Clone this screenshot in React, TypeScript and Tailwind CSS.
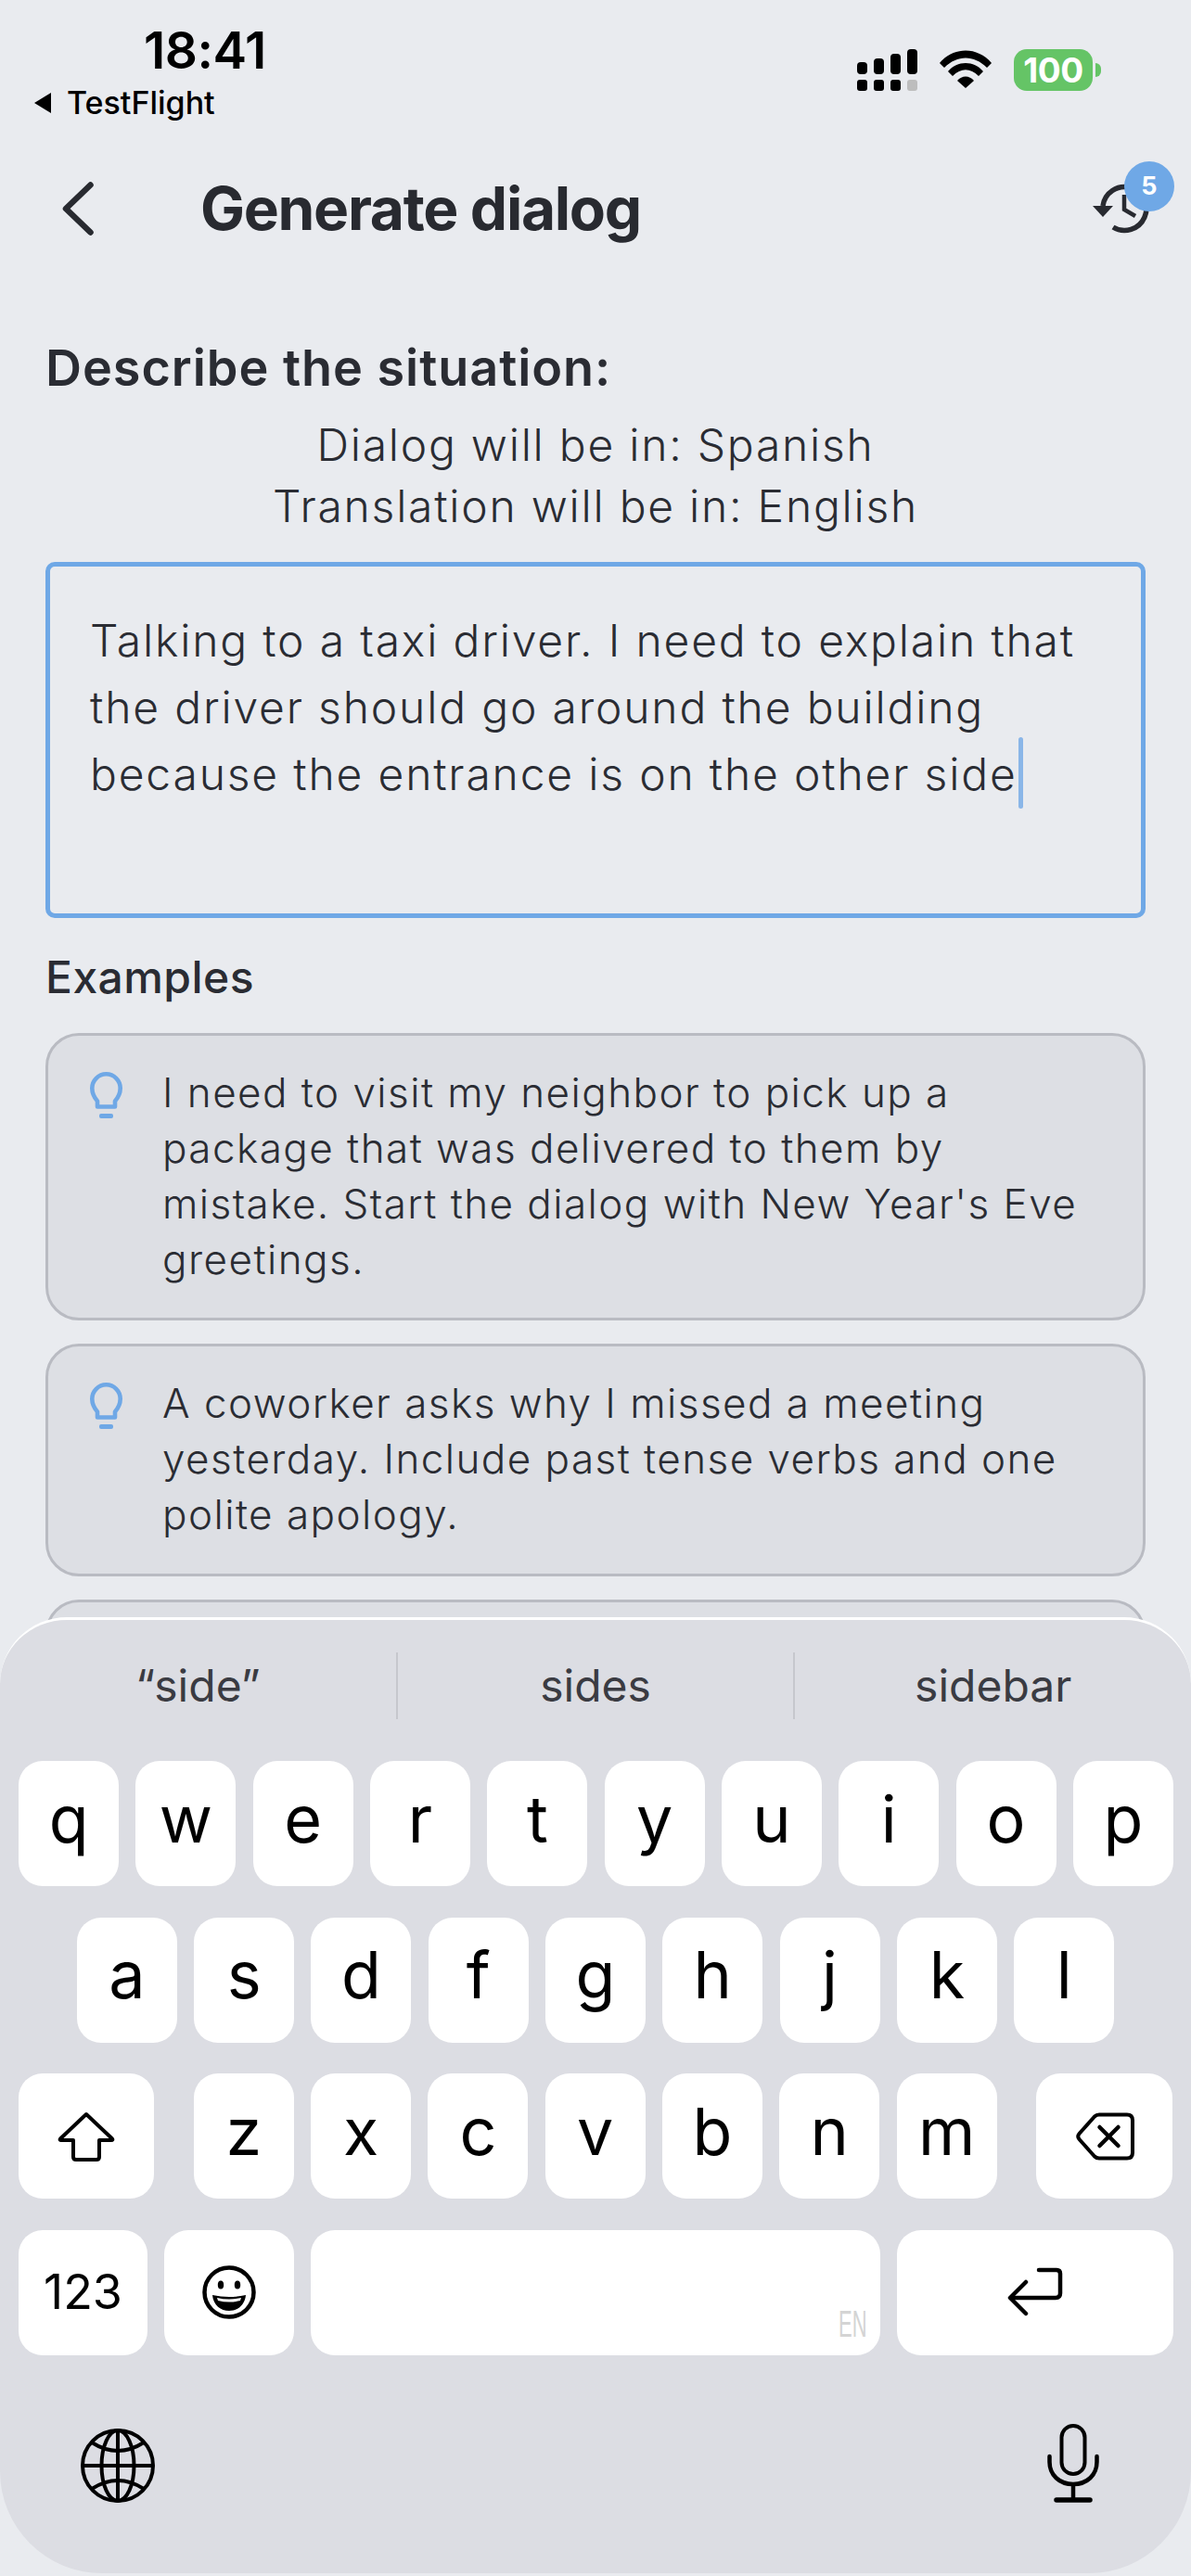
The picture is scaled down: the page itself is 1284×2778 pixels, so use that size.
const ink = "#282a30";

function Signal() {
  return (
    <div className="flex gap-[7px]">
      {[13, 17, 22, 27].map((h, i) => (
        <div key={i} className="flex h-[45px] w-[11px] flex-col justify-end gap-[6px]">
          <div className="w-full rounded-[4px] bg-black" style={{ height: h }} />
          <div className={i === 3 ? "h-[12px] w-full rounded-[3px] bg-[#bdbdbd]" : "h-[12px] w-full rounded-[3px] bg-black"} />
        </div>
      ))}
    </div>
  );
}

function Wifi() {
  return (
    <svg width="58" height="42" viewBox="0 0 58 42" className="block">
      <path d="M1 15 C16 -3 42 -3 57 15 L52 20 C38 6 20 6 6 20 Z" fill="#000" />
      <path d="M10 24 C20 12 38 12 48 24 L43 29 C34 20 24 20 15 29 Z" fill="#000" />
      <path d="M20 34 C25 28 33 28 38 34 L29 42 Z" fill="#000" />
    </svg>
  );
}

function Battery() {
  return (
    <div className="flex items-center gap-[3px]">
      <div className="flex h-[45px] w-[85px] items-center justify-center rounded-[14px] bg-[#65c466] text-[37px] font-bold leading-none tracking-[-0.5px] text-white">100</div>
      <div className="h-[15px] w-[6px] rounded-r-full bg-[#65c466]" />
    </div>
  );
}

function HistoryIcon() {
  return (
    <svg width="66" height="60" viewBox="0 0 66 60" fill="none" className="block">
      <path d="M11 27 A23.5 23.5 0 1 1 22 50" stroke={ink} strokeWidth="5.5" />
      <path d="M0 27 L22 27 L11 39 Z" fill={ink} />
      <path d="M34 15 L34 31 L46 38" stroke={ink} strokeWidth="4.5" />
    </svg>
  );
}

function Bulb() {
  return (
    <svg width="35" height="50" viewBox="0 0 35 50" fill="none" className="mt-[8px] block shrink-0">
      <path d="M8 37.5 L8 31.5 C5 28 2.3 23.5 2.3 17.5 A15.2 15.2 0 0 1 32.7 17.5 C32.7 23.5 30 28 27 31.5 L27 37.5 Z" stroke="#6fa8e6" strokeWidth="4.6" strokeLinejoin="round" />
      <rect x="10" y="45" width="15" height="5" rx="2" fill="#6fa8e6" />
    </svg>
  );
}

function Card({ lines, className = "" }: { lines: string[]; className?: string }) {
  return (
    <div className={"flex gap-[43px] rounded-[36px] border-[3px] border-[#b9bbc2] bg-[#dddfe4] pl-[45px] pt-[31px] " + className}>
      <Bulb />
      <div className="text-[44px] font-[350] leading-[60px] tracking-[1.45px] text-[#2a2c33]">
        {lines.map((l) => (
          <div key={l} className="whitespace-nowrap">{l}</div>
        ))}
      </div>
    </div>
  );
}

function Key({ children, className = "w-[108px]" }: { children?: React.ReactNode; className?: string }) {
  return (
    <div className={"relative flex h-[135px] items-center justify-center rounded-[26px] bg-white leading-none text-black " + className}>
      {children}
    </div>
  );
}

function Row({ keys }: { keys: string }) {
  return (
    <>
      {keys.split("").map((k) => (
        <Key key={k}>
          <span className="mt-[-10px] text-[70px] font-normal">{k}</span>
        </Key>
      ))}
    </>
  );
}

function Shift() {
  return (
    <svg width="62" height="54" viewBox="0 0 62 54" fill="none">
      <path d="M31 3 L59 29.5 Q60 31 58 31 L45 31 L45 49 Q45 52 42 52 L20 52 Q17 52 17 49 L17 31 L4 31 Q2 31 3 29.5 Z" stroke="#000" strokeWidth="4" strokeLinejoin="round" />
    </svg>
  );
}

function Backspace() {
  return (
    <svg width="64" height="52" viewBox="0 0 64 52" fill="none">
      <path d="M26 2.5 L56 2.5 Q62 2.5 62 8.5 L62 43.5 Q62 49.5 56 49.5 L26 49.5 Q23 49.5 21 47.5 L4.5 29 Q2 26 4.5 23 L21 4.5 Q23 2.5 26 2.5 Z" stroke="#000" strokeWidth="4" strokeLinejoin="round" />
      <path d="M26.5 16 L46.5 36 M46.5 16 L26.5 36" stroke="#000" strokeWidth="4.5" strokeLinecap="round" />
    </svg>
  );
}

function Emoji() {
  return (
    <svg width="58" height="58" viewBox="0 0 58 58" fill="none">
      <circle cx="29" cy="29" r="26.5" stroke="#000" strokeWidth="4.5" />
      <ellipse cx="20" cy="21" rx="3.2" ry="4.5" fill="#000" />
      <ellipse cx="38" cy="21" rx="3.2" ry="4.5" fill="#000" />
      <path d="M11 32 Q29 36 47 32 C46 43 38 49 29 49 C20 49 12 43 11 32 Z" fill="#000" />
      <path d="M16 35 Q29 38 42 35 L41 38 Q29 41 17 38 Z" fill="#fff" />
    </svg>
  );
}

function Return() {
  return (
    <svg width="60" height="54" viewBox="0 0 60 54" fill="none" stroke="#000" strokeWidth="4.5" strokeLinecap="round" strokeLinejoin="round">
      <path d="M34 3 L53 3 Q57 3 57 7 L57 28 Q57 33 52 33 L4 33" />
      <path d="M20 16 L3 33 L20 50" />
    </svg>
  );
}

function Globe() {
  return (
    <svg width="80" height="80" viewBox="0 0 80 80" fill="none" stroke="#000" strokeWidth="4">
      <circle cx="40" cy="40" r="38" />
      <ellipse cx="40" cy="40" rx="17.5" ry="38" />
      <path d="M40 2 L40 78 M2 40 L78 40" />
      <path d="M12 15 Q40 33 68 15 M12 65 Q40 47 68 65" />
    </svg>
  );
}

function Mic() {
  return (
    <svg width="56" height="85" viewBox="0 0 56 85" fill="none" stroke="#000">
      <rect x="15.5" y="2" width="25" height="52" rx="12.5" strokeWidth="4" />
      <path d="M2.5 35 L2.5 41 C2.5 55 13 65 28 65 C43 65 53.5 55 53.5 41 L53.5 35" strokeWidth="4.5" strokeLinecap="round" />
      <path d="M28 65 L28 81" strokeWidth="4.5" />
      <path d="M10 82 L46 82" strokeWidth="5.5" strokeLinecap="round" />
    </svg>
  );
}

function Suggestion({ children }: { children: React.ReactNode }) {
  return <div className="flex w-[427px] items-center justify-center text-[48px] font-normal leading-none text-[#3a3b42]">{children}</div>;
}

export default function App() {
  return (
    <div
      className="relative h-[2778px] w-[1284px] overflow-hidden bg-[#e9ebef]"
      style={{ fontFamily: "Inter, 'Liberation Sans', sans-serif" }}
    >
      {/* Status bar */}
      <div className="flex h-[165px] items-start justify-between pl-[37px] pr-[97px] pt-[26px] text-black">
        <div>
          <div className="pl-[118px] text-[55px] font-semibold leading-[56px] tracking-[-0.5px]">18:41</div>
          <div className="mt-[7px] flex items-center gap-[12px]">
            <div className="h-0 w-0 border-y-[11px] border-r-[18px] border-y-transparent border-r-black" />
            <span className="ml-[5px] text-[34px] font-medium leading-[44px]">TestFlight</span>
          </div>
        </div>
        <div className="mt-[27px] flex items-start gap-[23px]">
          <Signal />
          <Wifi />
          <Battery />
        </div>
      </div>

      {/* Header */}
      <div className="flex h-[120px] items-center pl-[67px] pr-[40px]">
        <svg width="34" height="58" viewBox="0 0 34 58" fill="none" className="mr-[115px] block shrink-0">
          <path d="M30.5 3.5 L4 29 L30.5 54.5" stroke={ink} strokeWidth="6.5" strokeLinecap="round" strokeLinejoin="round" />
        </svg>
        <h1 className="flex-1 text-[64px] font-bold leading-none tracking-[-1.3px] text-[#282a30]">Generate dialog</h1>
        <div className="relative h-[60px] w-[66px]">
          <HistoryIcon />
          <div className="absolute left-[34px] top-[-21px] flex h-[54px] w-[54px] items-center justify-center rounded-full bg-[#6fa8e6] text-[27px] font-bold text-white">5</div>
        </div>
      </div>

      {/* Form */}
      <div className="px-[49px]">
        <h2 className="mt-[82px] text-[54px] font-semibold leading-[60px] tracking-[0.95px] text-[#2a2c33]">
          Describe the situation:
        </h2>
        <div className="mt-[20px] text-center text-[48px] font-[350] leading-[66px] tracking-[1.75px] text-[#2a2c33]">
          <div>Dialog will be in: Spanish</div>
          <div>Translation will be in: English</div>
        </div>
        <div className="relative mt-[27px] h-[384px] rounded-[10px] border-[5px] border-[#6fa8e6] pl-[43px] pt-[44px] text-[48px] font-[350] leading-[72px] tracking-[1.82px] text-[#2a2c33]">
          <div className="whitespace-nowrap">Talking to a taxi driver. I need to explain that</div>
          <div className="whitespace-nowrap">the driver should go around the building</div>
          <div className="flex whitespace-nowrap">
            because the entrance is on the other side
            <span className="ml-[1px] mt-[-4px] h-[77px] w-[5px] rounded-full bg-[#8ab6e8]" />
          </div>
        </div>
        <h3 className="mt-[36px] text-[48px] font-medium leading-[56px] tracking-[0.45px] text-[#2a2c33]">Examples</h3>
        <Card
          className="mt-[32px] h-[310px]"
          lines={[
            "I need to visit my neighbor to pick up a",
            "package that was delivered to them by",
            "mistake. Start the dialog with New Year's Eve",
            "greetings.",
          ]}
        />
        <Card
          className="mt-[25px] h-[251px]"
          lines={[
            "A coworker asks why I missed a meeting",
            "yesterday. Include past tense verbs and one",
            "polite apology.",
          ]}
        />
        <div className="mt-[25px] h-[200px] rounded-[36px] border-[3px] border-[#b9bbc2] bg-[#dddfe4]" />
      </div>

      {/* Keyboard */}
      <div className="absolute left-0 top-[1744px] h-[1031px] w-[1284px] rounded-b-[110px] rounded-t-[72px] border-t-[3px] border-white bg-[#dcdde3] pt-[35px]">
        <div className="flex h-[72px]">
          <Suggestion>“side”</Suggestion>
          <div className="w-[2px] bg-[#c6c7cd]" />
          <Suggestion>sides</Suggestion>
          <div className="w-[2px] bg-[#c6c7cd]" />
          <Suggestion>sidebar</Suggestion>
        </div>
        <div className="mt-[45px] flex flex-col gap-[33.5px]">
          <div className="flex justify-center gap-[18.3px] pl-[1px]">
            <Row keys="qwertyuiop" />
          </div>
          <div className="flex justify-center gap-[18.3px]">
            <Row keys="asdfghjkl" />
          </div>
          <div className="flex gap-[18.3px] pl-[20px]">
            <Key className="mr-[24.5px] w-[146px]"><Shift /></Key>
            <Row keys="zxcvbnm" />
            <Key className="ml-[24.5px] w-[147px]"><Backspace /></Key>
          </div>
          <div className="flex gap-[18px] pl-[20px]">
            <Key className="w-[139px]">
              <span className="text-[52px] font-normal">123</span>
            </Key>
            <Key className="w-[140px]"><Emoji /></Key>
            <Key className="w-[614px]">
              <span className="absolute bottom-[14px] right-[14px] origin-right scale-x-[0.55] text-[40px] leading-none text-[#d4d4d4]" style={{ fontFamily: "'Liberation Sans', sans-serif" }}>EN</span>
            </Key>
            <Key className="w-[298px]"><Return /></Key>
          </div>
        </div>
        <div className="mt-[74px] flex items-start justify-between pl-[87px] pr-[99px]">
          <div className="mt-[5px]"><Globe /></div>
          <Mic />
        </div>
      </div>
    </div>
  );
}
